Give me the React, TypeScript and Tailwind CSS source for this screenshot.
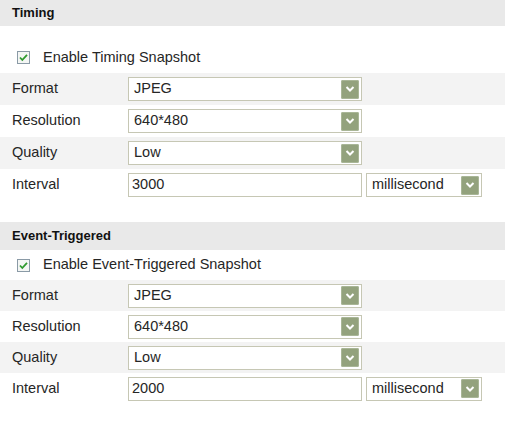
import React from "react";

function Arrow() {
  return (
    <span className="flex h-[19px] w-[18px] items-center justify-center rounded-[2px] bg-[#93a27d] shadow-[inset_0_0_0_1px_#a9b697]">
      <svg width="10" height="8" viewBox="0 0 10 8">
        <path d="M1.5 2 L5 5.5 L8.5 2" fill="none" stroke="#ffffff" strokeWidth="2" />
      </svg>
    </span>
  );
}

function Select({ value, width = "w-[234px]" }: { value: string; width?: string }) {
  return (
    <div
      className={`${width} flex h-[24px] items-center justify-between border border-[#c6c7b4] bg-white pl-[5px] pr-[2px]`}
    >
      <span>{value}</span>
      <Arrow />
    </div>
  );
}

function CheckBox() {
  return (
    <svg width="13" height="13" viewBox="0 0 13 13">
      <rect x="0.5" y="0.5" width="12" height="12" fill="#f4f6f4" stroke="#8a9aa6" />
      <path d="M3 6.5 L5.3 9 L10 3.8" fill="none" stroke="#2f9a2f" strokeWidth="1.8" />
    </svg>
  );
}

function Row({
  label,
  gray,
  rowClass,
  children,
}: {
  label: string;
  gray?: boolean;
  rowClass: string;
  children: React.ReactNode;
}) {
  return (
    <div className={`flex items-center ${rowClass} ${gray ? "bg-[#f3f3f3]" : "bg-white"}`}>
      <span className="w-[128px] pl-[12px]">{label}</span>
      {children}
    </div>
  );
}

function Section({
  title,
  check,
  interval,
  headerClass,
  checkClass,
  rowClass,
}: {
  title: string;
  check: string;
  interval: string;
  headerClass: string;
  checkClass: string;
  rowClass: string;
}) {
  return (
    <div>
      <div className={`flex items-center bg-[#e9e9e9] pl-[12px] text-[13px] font-bold text-[#111] ${headerClass}`}>
        {title}
      </div>
      <div className={`flex items-center gap-[13px] pl-[17px] ${checkClass}`}>
        <CheckBox />
        <span>{check}</span>
      </div>
      <Row label="Format" gray rowClass={rowClass}>
        <Select value="JPEG" />
      </Row>
      <Row label="Resolution" rowClass={rowClass}>
        <Select value="640*480" />
      </Row>
      <Row label="Quality" gray rowClass={rowClass}>
        <Select value="Low" />
      </Row>
      <Row label="Interval" rowClass={rowClass}>
        <div className="flex h-[24px] w-[234px] items-center border border-[#c6c7b4] bg-white pl-[3px]">
          {interval}
        </div>
        <div className="ml-[4px]">
          <Select value="millisecond" width="w-[116px]" />
        </div>
      </Row>
    </div>
  );
}

export default function App() {
  return (
    <div className="h-[444px] w-[505px] bg-white font-['Liberation_Sans',Arial,sans-serif] text-[14.5px] text-[#262626]">
      <Section
        title="Timing"
        check="Enable Timing Snapshot"
        interval="3000"
        headerClass="h-[26px]"
        checkClass="mt-[16px] h-[31px]"
        rowClass="h-[32px]"
      />
      <div className="h-[21px]" />
      <Section
        title="Event-Triggered"
        check="Enable Event-Triggered Snapshot"
        interval="2000"
        headerClass="h-[28px]"
        checkClass="h-[30px]"
        rowClass="h-[31px]"
      />
    </div>
  );
}
